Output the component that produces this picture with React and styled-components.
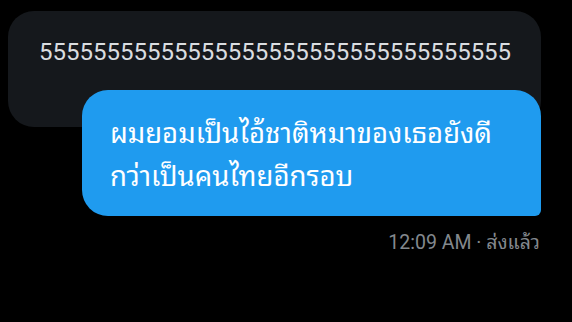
import React from "react";
import styled, {createGlobalStyle} from "styled-components";

const GlobalStyle = createGlobalStyle`
    html, body {
        margin: 0;
        padding: 0;
        background: #000000;
    }
`;

const Thread = styled.div`
    width: 572px;
    height: 322px;
    box-sizing: border-box;
    padding: 11px 31px 0 8px;
    display: flex;
    flex-direction: column;
    overflow: hidden;
    font-family: Roboto, "Noto Sans Thai Looped", "Noto Sans Thai", "Noto Sans", sans-serif;
`;

const Bubble = styled.div`
    box-sizing: border-box;
    border-radius: 26px;
    ${({$sent}) => $sent ? `
        align-self: flex-end;
        width: 459px;
        height: 126px;
        margin-top: -37px;
        padding: 20px 0 0 28px;
        background: #1f9bef;
        color: #ffffff;
        border-bottom-right-radius: 6px;
        font-family: "Noto Sans Thai Looped", "Noto Sans Thai", "Noto Sans", Roboto, sans-serif;
        font-size: 27.5px;
        line-height: 43px;
    ` : `
        align-self: stretch;
        height: 116px;
        padding: 25px 0 0 31px;
        background: #15181c;
        color: #dadde0;
        font-size: 24px;
        line-height: 32px;
    `}
`;

const Meta = styled.div`
    align-self: flex-end;
    margin-top: 15px;
    margin-right: 1px;
    color: #83888d;
    font-size: 19.5px;
    line-height: 24px;
`;

export default function App() {
    return (
        <>
            <GlobalStyle />
            <Thread>
                <Bubble>{"5".repeat(35)}</Bubble>
                <Bubble $sent>
                    ผมยอมเป็นไอ้ชาติหมาของเธอยังดี
                    <br />
                    กว่าเป็นคนไทยอีกรอบ
                </Bubble>
                <Meta>12:09 AM · ส่งแล้ว</Meta>
            </Thread>
        </>
    );
}
